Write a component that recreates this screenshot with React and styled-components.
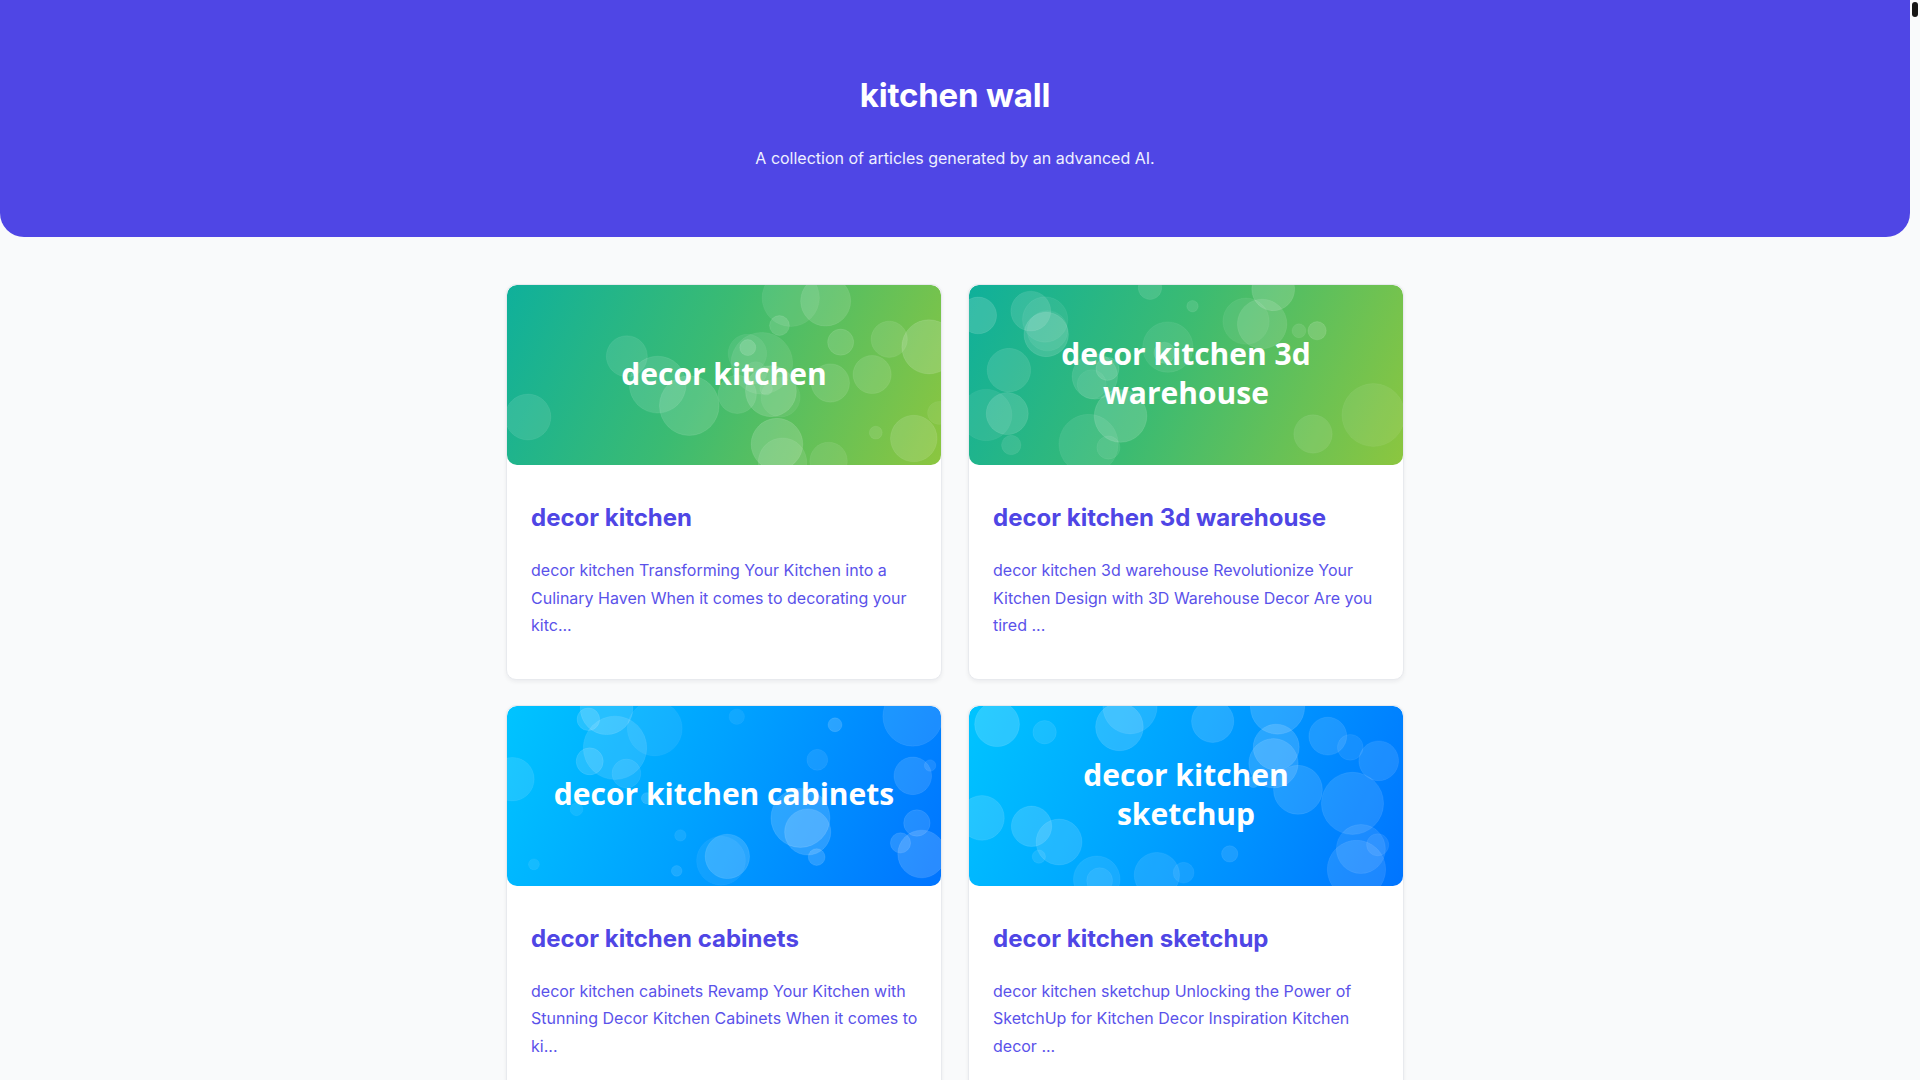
import React from "react";
import styled, { createGlobalStyle } from "styled-components";

const GlobalStyle = createGlobalStyle`
  html, body { margin: 0; padding: 0; }
  html { scrollbar-width: none; }
  body {
    background: #f9fafb;
    font-family: Inter, "Noto Sans", "Liberation Sans", sans-serif;
    -webkit-font-smoothing: antialiased;
  }
  ::-webkit-scrollbar { width: 0; height: 0; }
`;

const Page = styled.div`
  min-height: 100vh;
  margin-right: 10px;
  padding-bottom: 48px;
`;

/* drawn browser scrollbar, laid over the right edge of the viewport */
const ScrollRail = styled.div`
  position: fixed;
  top: 0;
  right: 0;
  bottom: 0;
  width: 10px;
  background: #f9fafb;
`;

const ScrollThumb = styled.div`
  margin: 2px 0 0 2px;
  width: 6px;
  height: 15px;
  border-radius: 3px;
  background: #151515;
`;

const Hero = styled.header`
  background: #4f46e5;
  border-radius: 0 0 24px 24px;
  padding: 75px 24px 67px;
  text-align: center;
  color: #ffffff;
`;

const HeroTitle = styled.h1`
  margin: 0 0 31px;
  font-size: 33px;
  line-height: 40px;
  font-weight: 700;
  letter-spacing: -0.2px;
`;

const HeroSubtitle = styled.p`
  margin: 0;
  font-size: 16px;
  line-height: 24px;
  color: #eef0ff;
`;

const Grid = styled.main`
  width: 898px;
  margin: 47px auto 0;
  display: grid;
  grid-template-columns: repeat(2, 1fr);
  column-gap: 26px;
  row-gap: 25px;
`;

const Card = styled.article`
  background: #ffffff;
  border: 1px solid #e8eaee;
  border-radius: 10px;
  box-shadow: 0 2px 4px rgba(15, 23, 42, 0.06);
  overflow: hidden;
`;

const Banner = styled.div`
  position: relative;
  height: 180px;
  border-radius: 10px;
  overflow: hidden;
  background: ${(p) => p.$gradient};
  display: flex;
  align-items: center;
  justify-content: center;
  padding-bottom: 4px;
  box-sizing: border-box;
`;

const BokehLayer = styled.svg`
  position: absolute;
  inset: 0;
  width: 100%;
  height: 100%;
`;

const BannerText = styled.div`
  position: relative;
  color: #ffffff;
  font-family: "Open Sans", "Noto Sans", sans-serif;
  font-weight: 700;
  font-size: 30px;
  line-height: 39px;
  text-align: center;
`;

const Body = styled.div`
  padding: 37px 16px 39px 24px;
`;

const CardTitle = styled.h2`
  margin: 0 0 23px;
  font-size: 24px;
  line-height: 32px;
  font-weight: 700;
  color: #4f46e5;
`;

const Excerpt = styled.p`
  margin: 0;
  font-size: 16px;
  line-height: 27.5px;
  color: #5a52ea;
`;

function mulberry32(a) {
  return function () {
    a |= 0;
    a = (a + 0x6d2b79f5) | 0;
    let t = Math.imul(a ^ (a >>> 15), 1 | a);
    t = (t + Math.imul(t ^ (t >>> 7), 61 | t)) ^ t;
    return ((t ^ (t >>> 14)) >>> 0) / 4294967296;
  };
}

function Bokeh({ seed }) {
  const rand = mulberry32(seed);
  const circles = [];
  for (let i = 0; i < 26; i++) {
    const big = rand() < 0.55;
    const r = big ? 18 + rand() * 14 : 5 + rand() * 10;
    circles.push({
      cx: rand() * 434,
      cy: rand() * 180,
      r,
      o: 0.06 + rand() * 0.11,
    });
  }
  return (
    <BokehLayer viewBox="0 0 434 180" preserveAspectRatio="none" aria-hidden="true">
      {circles.map((c, i) => (
        <circle
          key={i}
          cx={c.cx}
          cy={c.cy}
          r={c.r}
          fill="#ffffff"
          fillOpacity={c.o}
          stroke="#ffffff"
          strokeOpacity={c.o * 0.6}
          strokeWidth="1"
        />
      ))}
    </BokehLayer>
  );
}

const GREEN = "linear-gradient(115deg, #0fb09b 0%, #3bbb72 45%, #8cc63f 100%)";
const BLUE = "linear-gradient(115deg, #00c4ff 0%, #00a2ff 45%, #0074ff 100%)";

const articles = [
  {
    title: "decor kitchen",
    lines: ["decor kitchen"],
    gradient: GREEN,
    seed: 11,
    excerpt:
      "decor kitchen Transforming Your Kitchen into a Culinary Haven When it comes to decorating your kitc...",
  },
  {
    title: "decor kitchen 3d warehouse",
    lines: ["decor kitchen 3d", "warehouse"],
    gradient: GREEN,
    seed: 27,
    excerpt:
      "decor kitchen 3d warehouse Revolutionize Your Kitchen Design with 3D Warehouse Decor Are you tired ...",
  },
  {
    title: "decor kitchen cabinets",
    lines: ["decor kitchen cabinets"],
    gradient: BLUE,
    seed: 43,
    excerpt:
      "decor kitchen cabinets Revamp Your Kitchen with Stunning Decor Kitchen Cabinets When it comes to ki...",
  },
  {
    title: "decor kitchen sketchup",
    lines: ["decor kitchen", "sketchup"],
    gradient: BLUE,
    seed: 58,
    excerpt:
      "decor kitchen sketchup Unlocking the Power of SketchUp for Kitchen Decor Inspiration Kitchen decor ...",
  },
];

export default function App() {
  return (
    <>
      <GlobalStyle />
      <Page>
        <Hero>
          <HeroTitle>kitchen wall</HeroTitle>
          <HeroSubtitle>A collection of articles generated by an advanced AI.</HeroSubtitle>
        </Hero>
        <Grid>
          {articles.map((a) => (
            <Card key={a.title}>
              <Banner $gradient={a.gradient}>
                <Bokeh seed={a.seed} />
                <BannerText>
                  {a.lines.map((l, i) => (
                    <div key={i}>{l}</div>
                  ))}
                </BannerText>
              </Banner>
              <Body>
                <CardTitle>{a.title}</CardTitle>
                <Excerpt>{a.excerpt}</Excerpt>
              </Body>
            </Card>
          ))}
        </Grid>
      </Page>
      <ScrollRail aria-hidden="true">
        <ScrollThumb />
      </ScrollRail>
    </>
  );
}
